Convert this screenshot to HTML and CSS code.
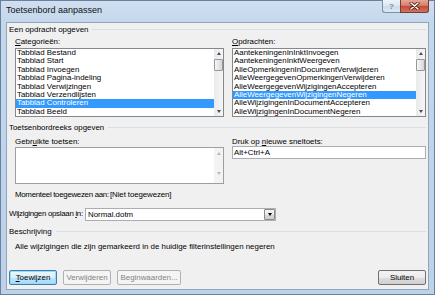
FILE: index.html
```html
<!DOCTYPE html>
<html>
<head>
<meta charset="utf-8">
<link rel="stylesheet" href="styles.css">
</head>
<body>
<div class="window">
  <div class="titlebar">
    <span class="title">Toetsenbord aanpassen</span>
    <div class="caption">
      <div class="cbtn help">?</div>
      <div class="cbtn close">
        <svg width="11" height="8" viewBox="0 0 11 8"><path d="M2 1 L9 7 M9 1 L2 7" stroke="#4a1a14" stroke-width="3" stroke-linecap="round"/><path d="M2 1 L9 7 M9 1 L2 7" stroke="#ffffff" stroke-width="1.6" stroke-linecap="round"/></svg>
      </div>
    </div>
  </div>
  <div class="client">
    <div class="group"><span>Een opdracht opgeven</span><i class="rule"></i></div>
    <div class="cols">
      <div class="col left">
        <div class="label l1"><u>C</u>ategorieën:</div>
        <div class="list">
          <ul class="items">
            <li>Tabblad Bestand</li>
            <li>Tabblad Start</li>
            <li>Tabblad Invoegen</li>
            <li>Tabblad Pagina-indeling</li>
            <li>Tabblad Verwijzingen</li>
            <li>Tabblad Verzendlijsten</li>
            <li class="sel">Tabblad Controleren</li>
            <li>Tabblad Beeld</li>
          </ul>
          <div class="vscroll">
            <div class="arrow"><i class="tri up"></i></div>
            <div class="thumb"></div>
            <div class="track"></div>
            <div class="arrow"><i class="tri down"></i></div>
          </div>
        </div>
      </div>
      <div class="col right">
        <div class="label l1"><u>O</u>pdrachten:</div>
        <div class="list">
          <ul class="items">
            <li>AantekeningenInInktInvoegen</li>
            <li>AantekeningenInktWeergeven</li>
            <li>AlleOpmerkingenInDocumentVerwijderen</li>
            <li>AlleWeergegevenOpmerkingenVerwijderen</li>
            <li>AlleWeergegevenWijzigingenAccepteren</li>
            <li class="sel">AlleWeergegevenWijzigingenNegeren</li>
            <li>AlleWijzigingenInDocumentAccepteren</li>
            <li>AlleWijzigingenInDocumentNegeren</li>
          </ul>
          <div class="vscroll">
            <div class="arrow"><i class="tri up"></i></div>
            <div class="thumb"></div>
            <div class="track"></div>
            <div class="arrow"><i class="tri down"></i></div>
          </div>
        </div>
      </div>
    </div>

    <div class="group g2"><span>Toetsenbordreeks opgeven</span><i class="rule"></i></div>
    <div class="cols">
      <div class="col left">
        <div class="label l2">Gebr<u>u</u>ikte toetsen:</div>
        <div class="textarea">
          <div class="tfield"></div>
          <div class="vscroll disabled">
            <div class="arrow"><i class="tri up"></i></div>
            <div class="track"></div>
            <div class="arrow"><i class="tri down"></i></div>
          </div>
        </div>
      </div>
      <div class="col right">
        <div class="label l2r">Druk op <u>n</u>ieuwe sneltoets:</div>
        <div class="input">Alt+Ctrl+A</div>
      </div>
    </div>

    <div class="current">
      <span class="cur-label">Momenteel toegewezen aan:</span>
      <span class="cur-value">[Niet toegewezen]</span>
    </div>

    <div class="save">
      <span class="save-label">Wijzigingen opslaan <u>i</u>n:</span>
      <div class="combo">
        <span class="combo-text">Normal.dotm</span>
        <div class="combo-btn"><i class="tri down dark"></i></div>
      </div>
    </div>

    <div class="group g3"><span>Beschrijving</span><i class="rule"></i></div>
    <div class="desc">Alle wijzigingen die zijn gemarkeerd in de huidige filterinstellingen negeren</div>

    <div class="buttons">
      <div class="btn default"><span><u>T</u>oewijzen</span></div>
      <div class="btn disabled">Verwijderen</div>
      <div class="btn disabled wide">Beginwaarden...</div>
      <div class="btn close-btn">Sluiten</div>
    </div>
  </div>
</div>
</body>
</html>
```

FILE: styles.css
```css
html, body {
  margin: 0;
  padding: 0;
  background: #bed3ea;
}

.window {
  width: 435px;
  height: 295px;
  box-sizing: border-box;
  border: 1px solid #6b809a;
  background: linear-gradient(#cfdff0 0px, #c3d7ed 22px, #bcd1ea 100%);
  display: flex;
  flex-direction: column;
  font-family: "Liberation Sans", Arial, sans-serif;
  font-size: 7.9px;
  color: #000;
}

u { text-decoration: underline; text-underline-offset: 1px; }

.titlebar {
  height: 21px;
  flex: none;
  display: flex;
  align-items: flex-start;
  padding-left: 5px;
}

.title {
  line-height: 18px;
  font-size: 9px;
  color: #111;
}

.caption {
  margin-left: auto;
  margin-right: 5px;
  margin-top: -1px;
  display: flex;
}

.cbtn {
  height: 13px;
  box-sizing: border-box;
  display: flex;
  align-items: center;
  justify-content: center;
}

.help {
  width: 18px;
  border: 1px solid #7d8fa5;
  border-top: none;
  border-right: none;
  border-bottom-left-radius: 3px;
  background: linear-gradient(#edf3fa 0%, #dbe6f2 50%, #cbdaeb 51%, #dde8f4 100%);
  color: #7f8b99;
  font-size: 8px;
  font-weight: bold;
}

.close {
  width: 29px;
  border: 1px solid #7a3b33;
  border-top: none;
  border-bottom-right-radius: 3px;
  background: linear-gradient(#e8a597 0%, #d7806c 45%, #c34d36 52%, #d3735d 100%);
}

.client {
  flex: 1;
  margin: 0 5px 4px 5px;
  box-sizing: border-box;
  border: 1px solid #91a5bb;
  background: #f0f0f0;
  padding: 0 2px;
  display: flex;
  flex-direction: column;
}

.group {
  display: flex;
  align-items: center;
  height: 13px;
  flex: none;
  white-space: nowrap;
}
.group.g2, .group.g3 { height: 21px; }

.rule {
  flex: 1;
  height: 0;
  border-top: 1px solid #d5dfe5;
  margin-left: 4px;
}

.cols {
  display: flex;
  gap: 8px;
  margin-left: 6px;
  flex: none;
}
.col.left { width: 209px; }
.col.right { width: 194px; }

.label { white-space: nowrap; }
.label.l1 { height: 12px; line-height: 12px; }
.label.l2 { height: 9px; line-height: 7px; }
.label.l2r { height: 8px; line-height: 7px; }

.list {
  height: 69px;
  box-sizing: border-box;
  border: 1px solid #828790;
  background: #fff;
  display: flex;
}

.items {
  flex: 1;
  margin: 0;
  padding: 0;
  list-style: none;
  overflow: hidden;
}
.items li {
  height: 8.4px;
  line-height: 8.4px;
  padding-left: 1px;
  white-space: nowrap;
}
.items li.sel {
  background: #3399ff;
  color: #fff;
}

.vscroll {
  width: 9px;
  flex: none;
  display: flex;
  flex-direction: column;
  background: linear-gradient(to right, #e9e9e9, #f6f6f6);
}

.arrow {
  height: 9px;
  display: flex;
  align-items: center;
  justify-content: center;
}
.thumb {
  height: 12px;
  margin: 1px 0 0 0;
  box-sizing: border-box;
  border: 1px solid #989898;
  border-radius: 1px;
  background: linear-gradient(to right, #f7f7f7, #e4e4e4 60%, #d6d6d6);
}
.track { flex: 1; }

.tri {
  display: block;
  width: 0;
  height: 0;
  border-left: 2.5px solid transparent;
  border-right: 2.5px solid transparent;
}
.tri.up { border-bottom: 3px solid #4d4d4d; }
.tri.down { border-top: 3px solid #4d4d4d; }

.vscroll.disabled { background: #f3f3f3; }
.vscroll.disabled .tri.up { border-bottom-color: #b8b8b8; }
.vscroll.disabled .tri.down { border-top-color: #b8b8b8; }
.vscroll.disabled .arrow { height: 11px; }
.vscroll.disabled .arrow:last-child { margin-bottom: 4px; }

.textarea {
  height: 37px;
  box-sizing: border-box;
  border: 1px solid #9a9fa6;
  background: #fff;
  display: flex;
}
.tfield { flex: 1; }

.input {
  height: 13px;
  box-sizing: border-box;
  border: 1px solid #abadb3;
  background: #fff;
  line-height: 11px;
  padding-left: 1px;
}

.current {
  margin-top: 5px;
  margin-left: 6px;
  height: 12px;
  line-height: 12px;
  display: flex;
  flex: none;
  white-space: nowrap;
}
.cur-label { width: 95px; flex: none; letter-spacing: -0.3px; }
.cur-value { flex: none; letter-spacing: -0.1px; }

.save {
  margin-top: 6px;
  height: 14px;
  display: flex;
  align-items: flex-start;
  flex: none;
  white-space: nowrap;
}
.save-label {
  width: 76px;
  flex: none;
  line-height: 14px;
  letter-spacing: -0.3px;
}
.combo {
  margin-top: 1px;
  width: 191px;
  flex: none;
  height: 13px;
  box-sizing: border-box;
  border: 1px solid #abadb3;
  background: #fff;
  display: flex;
}
.combo-text {
  flex: 1;
  line-height: 11px;
  padding-left: 2px;
}
.combo-btn {
  width: 11px;
  box-sizing: border-box;
  border: 1px solid #8a8a8a;
  border-radius: 1px;
  background: linear-gradient(#f3f3f3 0%, #e9e9e9 50%, #d9d9d9 51%, #cdcdcd 100%);
  display: flex;
  align-items: center;
  justify-content: center;
}
.tri.dark { border-top-color: #000; }

.desc {
  margin-left: 6px;
  height: 10px;
  line-height: 10px;
  white-space: nowrap;
  flex: none;
}

.buttons {
  margin-top: 18px;
  display: flex;
  gap: 6px;
  flex: none;
}
.btn {
  width: 48px;
  height: 15px;
  box-sizing: border-box;
  border: 1px solid #707070;
  border-radius: 2px;
  background: linear-gradient(#f3f3f3 0%, #ebebeb 50%, #dddddd 51%, #d0d0d0 100%);
  display: flex;
  align-items: center;
  justify-content: center;
  white-space: nowrap;
}
.btn.wide { width: 64px; }
.btn.default {
  border-color: #3c7fb1;
  box-shadow: inset 0 0 0 1px #9fd8f7;
  background: linear-gradient(#eaf6fd 0%, #d9f0fc 50%, #bee6fd 51%, #a7d9f5 100%);
}
.btn.disabled {
  border-color: #adb2b5;
  background: #f4f4f4;
  color: #838383;
}
.btn.close-btn { margin-left: auto; }
```
